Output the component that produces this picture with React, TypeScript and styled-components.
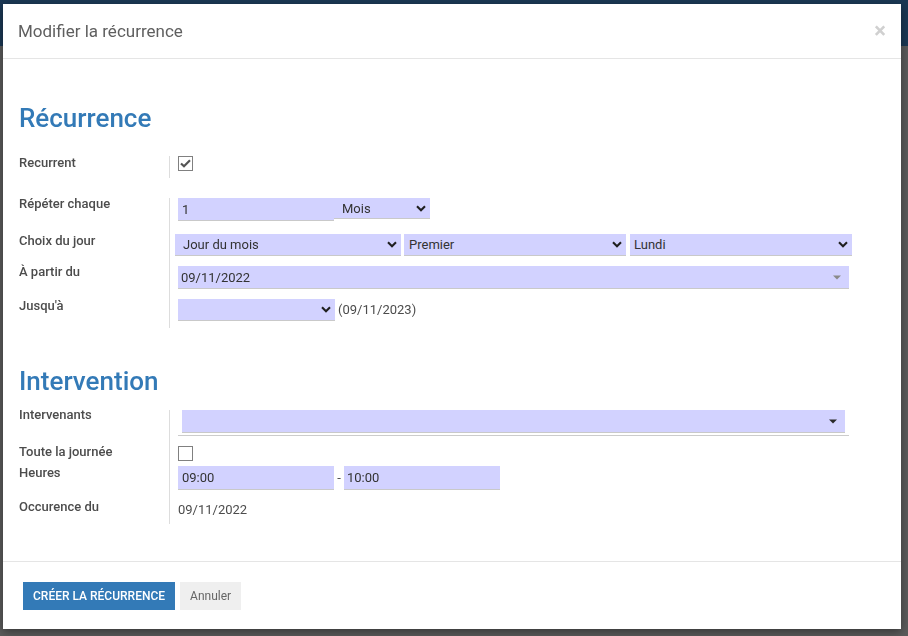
import React from 'react';
import styled, { createGlobalStyle } from 'styled-components';

const Global = createGlobalStyle`
  html, body { margin: 0; padding: 0; }
  body {
    width: 908px;
    height: 636px;
    overflow: hidden;
    background: #5b5b5b;
    font-family: Roboto, "Noto Sans", "Liberation Sans", sans-serif;
  }
`;

const Backdrop = styled.div`
  width: 908px;
  height: 636px;
  display: flex;
  flex-direction: column;
  background: #5b5b5b;
`;

const BackNav = styled.div`
  flex: none;
  height: 46px;
  background: #1b3854;
`;

const BackFill = styled.div`
  flex: 1;
`;

const Modal = styled.div`
  position: fixed;
  left: 3px;
  top: 4px;
  width: 898px;
  height: 625px;
  background: #fff;
  display: flex;
  flex-direction: column;
  box-shadow: 0 3px 9px rgba(0, 0, 0, 0.4);
`;

const Header = styled.div`
  flex: none;
  height: 54px;
  border-bottom: 1px solid #e5e5e5;
  display: flex;
  align-items: center;
  justify-content: space-between;
  padding: 0 15px 0 15px;
`;

const Title = styled.h4`
  margin: 0;
  font-size: 17px;
  font-weight: 400;
  color: #5f5f5f;
`;

const Close = styled.span`
  font-size: 22px;
  font-weight: 700;
  color: #d0d0d0;
  line-height: 1;
`;

const Body = styled.div`
  flex: 1;
  padding: 44px 0 0 16px;
`;

const Heading = styled.h1<{ $mt: number }>`
  margin: ${(p) => p.$mt}px 0 0 0;
  font-size: 26px;
  line-height: 30px;
  font-weight: 500;
  color: #337ab7;
`;

const Group = styled.div<{ $mt: number }>`
  margin-top: ${(p) => p.$mt}px;
  width: 830px;
  display: flex;
  flex-direction: column;
`;

const Row = styled.div<{ $h: number }>`
  display: grid;
  grid-template-columns: 151px 1fr;
  height: ${(p) => p.$h}px;
`;

const LabelCell = styled.div`
  border-right: 1px solid #dddddd;
`;

const Label = styled.div<{ $dy: number }>`
  margin-top: ${(p) => p.$dy}px;
  font-size: 13px;
  line-height: 14px;
  font-weight: 500;
  color: #4c4c4c;
  white-space: nowrap;
`;

const FieldCell = styled.div<{ $spread?: boolean }>`
  padding-left: 8px;
  display: flex;
  align-items: flex-start;
  margin-left: ${(p) => (p.$spread ? '-3px' : '0')};
  margin-right: ${(p) => (p.$spread ? '-3px' : '0')};
`;

const Box = styled.div<{ $w?: number; $h: number; $pl?: number }>`
  box-sizing: border-box;
  ${(p) => (p.$w ? `width: ${p.$w}px; flex: none;` : 'flex: 1;')}
  height: ${(p) => p.$h}px;
  background: #d2d2ff;
  border-bottom: 1px solid #c9c9c9;
  display: flex;
  align-items: center;
  justify-content: space-between;
  padding: 0 4px 0 ${(p) => p.$pl ?? 4}px;
  font-size: 13px;
  color: #333;
  white-space: nowrap;
`;

const Gap = styled.div<{ $w: number }>`
  flex: none;
  width: ${(p) => p.$w}px;
`;

const WideWrap = styled.div`
  flex: 1;
  box-sizing: border-box;
  height: 26px;
  padding: 0 4px;
  border-bottom: 1px solid #cccccc;
  display: flex;
`;

const Check = styled.div`
  box-sizing: border-box;
  width: 15px;
  height: 15px;
  border: 1px solid #808080;
  display: flex;
  align-items: center;
  justify-content: center;
  background: #fff;
`;

const Note = styled.span`
  margin-left: 3px;
  font-size: 13px;
  line-height: 22px;
  color: #4c4c4c;
`;

const Dash = styled.span`
  width: 10px;
  text-align: center;
  font-size: 13px;
  line-height: 24px;
  color: #4c4c4c;
`;

const Value = styled.div`
  font-size: 13px;
  line-height: 14px;
  margin-top: 1px;
  color: #4c4c4c;
`;

const Footer = styled.div`
  flex: none;
  border-top: 1px solid #e5e5e5;
  padding: 20px 20px 19px 20px;
  display: flex;
  gap: 5px;
`;

const Button = styled.button<{ $primary?: boolean }>`
  height: 28px;
  padding: 0 10px;
  border: none;
  border-radius: 0;
  font-family: Roboto, "Noto Sans", sans-serif;
  font-size: 12px;
  font-weight: ${(p) => (p.$primary ? 500 : 400)};
  text-transform: ${(p) => (p.$primary ? 'uppercase' : 'none')};
  background: ${(p) => (p.$primary ? '#337ab7' : '#efefef')};
  color: ${(p) => (p.$primary ? '#fff' : '#666')};
`;

const Chevron = () => (
  <svg width="10" height="7" viewBox="0 0 10 7">
    <path d="M1 1.3 L5 5.2 L9 1.3" fill="none" stroke="#1f1f1f" strokeWidth="2.1" />
  </svg>
);

const Caret = ({ color }: { color: string }) => (
  <svg width="8" height="5" viewBox="0 0 8 5" style={{ marginRight: 4 }}>
    <path d="M0 0.5 H8 L4 4.5 Z" fill={color} />
  </svg>
);

const CheckMark = () => (
  <svg width="11" height="9" viewBox="0 0 11 9">
    <path d="M1 4.5 L4 7.3 L10 1.3" fill="none" stroke="#555" strokeWidth="2.2" />
  </svg>
);

export default function App() {
  return (
    <>
      <Global />
      <Backdrop>
        <BackNav />
        <BackFill />
      </Backdrop>
      <Modal>
        <Header>
          <Title>Modifier la récurrence</Title>
          <Close>×</Close>
        </Header>
        <Body>
          <Heading $mt={0}>Récurrence</Heading>
          <Group $mt={23}>
            <Row $h={22}>
              <LabelCell>
                <Label $dy={0}>Recurrent</Label>
              </LabelCell>
              <FieldCell>
                <Check>
                  <CheckMark />
                </Check>
              </FieldCell>
            </Row>
          </Group>
          <Group $mt={20}>
            <Row $h={36}>
              <LabelCell>
                <Label $dy={-1}>Répéter chaque</Label>
              </LabelCell>
              <FieldCell>
                <Box $w={156} $h={23}>1</Box>
                <Box $w={96} $h={21} $pl={8}>
                  Mois
                  <Chevron />
                </Box>
              </FieldCell>
            </Row>
            <Row $h={32}>
              <LabelCell>
                <Label $dy={0}>Choix du jour</Label>
              </LabelCell>
              <FieldCell $spread>
                <Box $w={226} $h={22} $pl={8}>
                  Jour du mois
                  <Chevron />
                </Box>
                <Gap $w={3} />
                <Box $w={222} $h={22} $pl={5}>
                  Premier
                  <Chevron />
                </Box>
                <Gap $w={4} />
                <Box $w={222} $h={22} $pl={4}>
                  Lundi
                  <Chevron />
                </Box>
              </FieldCell>
            </Row>
            <Row $h={33}>
              <LabelCell>
                <Label $dy={-1}>À partir du</Label>
              </LabelCell>
              <FieldCell>
                <Box $h={23} $pl={3}>
                  09/11/2022
                  <Caret color="#8a8a8a" />
                </Box>
              </FieldCell>
            </Row>
            <Row $h={29}>
              <LabelCell>
                <Label $dy={0}>Jusqu'à</Label>
              </LabelCell>
              <FieldCell>
                <Box $w={157} $h={22}>
                  <span />
                  <Chevron />
                </Box>
                <Note>(09/11/2023)</Note>
              </FieldCell>
            </Row>
          </Group>
          <Heading $mt={38}>Intervention</Heading>
          <Group $mt={14}>
            <Row $h={36}>
              <LabelCell>
                <Label $dy={-2}>Intervenants</Label>
              </LabelCell>
              <FieldCell>
                <WideWrap>
                  <Box $h={23}>
                    <span />
                    <Caret color="#2a2a2a" />
                  </Box>
                </WideWrap>
              </FieldCell>
            </Row>
            <Row $h={20}>
              <LabelCell>
                <Label $dy={-1}>Toute la journée</Label>
              </LabelCell>
              <FieldCell>
                <Check />
              </FieldCell>
            </Row>
            <Row $h={36}>
              <LabelCell>
                <Label $dy={0}>Heures</Label>
              </LabelCell>
              <FieldCell>
                <Box $w={156} $h={24}>09:00</Box>
                <Dash>-</Dash>
                <Box $w={156} $h={24} $pl={3}>10:00</Box>
              </FieldCell>
            </Row>
            <Row $h={22}>
              <LabelCell>
                <Label $dy={-2}>Occurence du</Label>
              </LabelCell>
              <FieldCell>
                <Value>09/11/2022</Value>
              </FieldCell>
            </Row>
          </Group>
        </Body>
        <Footer>
          <Button $primary>Créer la récurrence</Button>
          <Button>Annuler</Button>
        </Footer>
      </Modal>
    </>
  );
}
